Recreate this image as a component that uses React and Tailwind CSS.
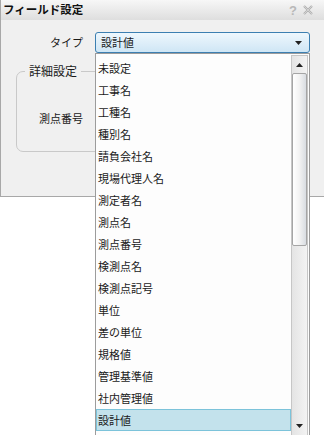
const items = [
  '未設定',
  '工事名',
  '工種名',
  '種別名',
  '請負会社名',
  '現場代理人名',
  '測定者名',
  '測点名',
  '測点番号',
  '検測点名',
  '検測点記号',
  '単位',
  '差の単位',
  '規格値',
  '管理基準値',
  '社内管理値',
  '設計値',
];

function Tri({ up = false }) {
  return (
    <svg width="7" height="4" viewBox="0 0 7 4">
      <path d={up ? 'M0 4 L3.5 0 L7 4 Z' : 'M0 0 L7 0 L3.5 4 Z'} fill="#222" />
    </svg>
  );
}

export default function App() {
  const selected = '設計値';

  return (
    <div
      className="relative h-[435px] w-[324px] overflow-hidden bg-white text-[11px] text-[#1a1a1a]"
      style={{ fontFamily: '"Noto Sans CJK JP", sans-serif' }}
    >
      <div className="flex h-[197px] flex-col border-b border-l border-[#a8a8a8]">
        <div className="flex h-[20px] items-center justify-between bg-gradient-to-b from-[#f7f7f7] to-[#dedede] pl-[2px] pr-[11px]">
          <span className="text-[11.5px] font-bold leading-none text-[#111]">フィールド設定</span>
          <div className="flex items-center gap-[6px]">
            <span className="text-[13px] font-bold leading-none text-[#b8b8b8]" style={{ fontFamily: '"Liberation Sans", sans-serif' }}>?</span>
            <svg width="10" height="10" viewBox="0 0 10 10">
              <path d="M1 1 L9 9 M9 1 L1 9" stroke="#b0b0b0" strokeWidth="2.2" />
              <path d="M1 1 L9 9 M9 1 L1 9" stroke="#e8e8e8" strokeWidth="0.6" />
            </svg>
          </div>
        </div>

        <div className="flex-1 bg-[#f0f0f0] pt-[12px]">
          <div className="flex items-center">
            <span className="w-[82px] text-right leading-none">タイプ</span>
            <div className="ml-[12px] flex h-[21px] w-[215px] items-center justify-between rounded-[3px] border border-[#3c7fb1] bg-gradient-to-b from-[#eef7fd] to-[#cfe6f5] pl-[5px] pr-[7px]">
              <span className="leading-none">{selected}</span>
              <Tri />
            </div>
          </div>

          <fieldset className="ml-[15px] mt-[12px] h-[87px] w-[240px] rounded-[7px] border border-[#c9c9c9]">
            <legend className="ml-[8px] px-[4px] text-[12px] leading-none">詳細設定</legend>
            <div className="ml-[22px] mt-[36px] leading-none">測点番号</div>
          </fieldset>
        </div>
      </div>

      <div className="absolute left-[95px] top-[53px] flex h-[400px] w-[215px] border border-[#9c9c9c] bg-[#fdfdfd]">
        <div className="flex flex-1 flex-col pt-[3px]">
          {items.map((it) => (
            <div
              key={it}
              className={
                it === selected
                  ? 'flex h-[22px] items-center border border-[#7cc3da] bg-[#c3e2ec] pl-[1px]'
                  : 'flex h-[22px] items-center border border-transparent pl-[1px]'
              }
            >
              <span className="leading-none">{it}</span>
            </div>
          ))}
        </div>
        <div className="my-[1px] mr-[1px] flex w-[17px] flex-col border border-[#c6c6c6] bg-gradient-to-r from-[#e4e4e4] to-[#f3f3f3]">
          <div className="flex h-[17px] items-center justify-center">
            <Tri up />
          </div>
          <div className="h-[173px] rounded-[2px] border border-[#a5a5a5] bg-gradient-to-r from-[#ffffff] via-[#f2f2f2] to-[#d9dde2]" />
          <div className="h-[171px]" />
          <div className="flex h-[17px] items-center justify-center">
            <Tri />
          </div>
        </div>
      </div>
    </div>
  );
}
